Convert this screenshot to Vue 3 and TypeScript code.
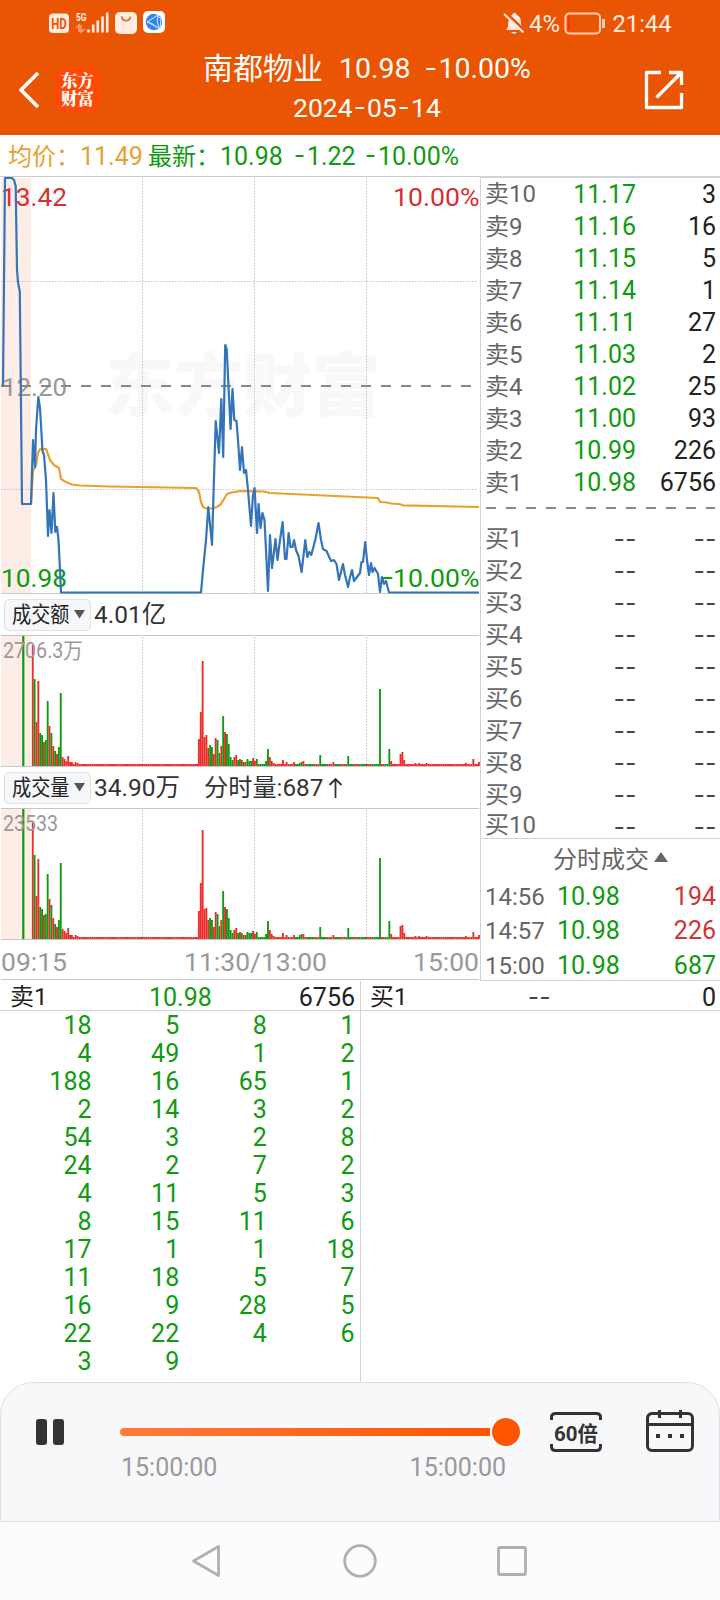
<script setup lang="ts">
type Level = { label: string; price: string; size: string }
type Bar = { x: number; h: number; fill: string }

const RED = '#ee2a2a'
const GREEN = '#109a10'

const asks: Level[] = [
  ['卖10', '11.17', '3'], ['卖9', '11.16', '16'], ['卖8', '11.15', '5'], ['卖7', '11.14', '1'],
  ['卖6', '11.11', '27'], ['卖5', '11.03', '2'], ['卖4', '11.02', '25'], ['卖3', '11.00', '93'],
  ['卖2', '10.99', '226'], ['卖1', '10.98', '6756'],
].map(([label, price, size]) => ({ label, price, size }))

const bids: string[] = Array.from({ length: 10 }, (_, i) => `买${i + 1}`)

const trades = [
  { time: '14:56', price: '10.98', size: '194', up: true },
  { time: '14:57', price: '10.98', size: '226', up: true },
  { time: '15:00', price: '10.98', size: '687', up: false },
]

const queue: (number | string)[][] = [
  [18, 5, 8, 1], [4, 49, 1, 2], [188, 16, 65, 1], [2, 14, 3, 2], [54, 3, 2, 8], [24, 2, 7, 2],
  [4, 11, 5, 3], [8, 15, 11, 6], [17, 1, 1, 18], [11, 18, 5, 7], [16, 9, 28, 5], [22, 22, 4, 6], [3, 9, '', ''],
]

const pricePoints =
  '3,386 5,178 12,178 14,180 15.7,186 17,270 18,282 19.8,292 20.8,386 22,504 31,504 33,440 35,467 36,430 38.3,397 40,408 41.3,430 42.5,451 44,455 46,480 48,536 49.5,510 51.5,533 53.5,493 55.3,532 57,527 58.5,540 60,570 61,592.5 201,592.5 203,570 206,540 208.3,507 212,545 215.7,421 219,453 221.3,399 223.2,457 225.2,345 226.7,349 230.6,429 232.5,389 234.3,420 236.5,421 238,440 240,470 242,447 244,473 246,470 248,490 251,526 253,495 254.6,488 257,533 258.6,504 260.5,528 262.5,513 264.5,520 266,550 268,591 270,535 272,568 275.5,539 277.5,560 280,540 282.6,522 285,559 286.5,559 288.6,533 290.5,547 292.5,547 294,540 296,550 298.5,556 301.6,572 305.3,540 307.3,557 309.3,552 311.3,555 315.5,539 318.5,523 321,540 323,549 326.5,551 331,561 334,560 336.5,564 339,580 343,564 345,575 348,587 350,577 352,570 354,581 357,577 360,573 361.5,562 363,562 365.2,542 367,560 369,575 371,563 372.5,572 374.5,568 378,574 380,592 382,577 384,584 386,581 389,592.5 479,592.5'

const averagePoints =
  '31,504 33,471 36,465 38,453 40,449 46,449 50,460 54,465 59,468 61,479 66,482 72,484.5 80,485.5 110,486.5 196,488 199,492 201,502 203,507 206,508.5 213,508.5 217,507 221,504 224,499 227,494 231,492.5 241,491 264,491.5 270,493 378,498 380,502 387,502.5 391,503.5 399,504 403,505.3 479,507'

/* minute index: [direction, turnover height, volume height] */
const peaks: Record<number, [string, number, number]> = {
  0: ['r', 121, 117], 1: ['g', 87, 84], 2: ['r', 44, 43], 3: ['r', 85, 80], 4: ['g', 33, 32], 5: ['g', 31, 30],
  6: ['r', 24, 24], 7: ['g', 26, 25], 8: ['g', 65, 65], 9: ['r', 40, 40], 10: ['g', 33, 34], 11: ['r', 20, 21],
  12: ['g', 15, 15], 13: ['r', 12, 12], 14: ['g', 19, 19], 15: ['g', 73, 76], 16: ['r', 9, 10], 17: ['r', 7, 8],
  18: ['r', 5, 6], 19: ['r', 10, 11], 20: ['r', 4, 4], 21: ['r', 4, 4], 23: ['r', 4, 4], 24: ['r', 3, 3],
  89: ['r', 27, 28], 90: ['r', 54, 56], 91: ['r', 105, 109], 92: ['r', 29, 30], 93: ['r', 31, 31], 94: ['r', 18, 19],
  95: ['g', 21, 21], 96: ['g', 19, 19], 97: ['r', 12, 12], 98: ['r', 28, 27], 99: ['g', 26, 25], 100: ['g', 13, 13],
  101: ['r', 20, 19], 102: ['g', 50, 48], 103: ['r', 34, 32], 104: ['g', 32, 30], 105: ['g', 22, 21], 106: ['g', 9, 9],
  107: ['g', 6, 6], 108: ['r', 9, 9], 109: ['r', 11, 11], 110: ['g', 6, 6], 111: ['g', 7, 7], 112: ['r', 6, 6],
  113: ['g', 4, 4], 114: ['r', 4, 4], 115: ['g', 7, 7], 116: ['g', 5, 6], 117: ['g', 5, 6], 118: ['r', 8, 8],
  119: ['r', 5, 5], 120: ['g', 7, 7], 125: ['g', 5, 5], 126: ['g', 17, 18], 127: ['r', 9, 9], 128: ['r', 5, 5],
  129: ['r', 3, 3], 134: ['r', 6, 6], 136: ['r', 4, 4], 140: ['r', 4, 4], 143: ['g', 3, 4], 144: ['g', 4, 5], 145: ['r', 5, 5],
  154: ['g', 11, 12], 161: ['r', 4, 4], 169: ['g', 10, 11], 186: ['g', 77, 81], 191: ['g', 17, 18], 192: ['r', 5, 5],
  197: ['r', 12, 13], 198: ['r', 14, 14], 199: ['r', 6, 6], 205: ['r', 3, 3], 207: ['r', 3, 3], 211: ['r', 3, 3],
  232: ['r', 3, 3], 236: ['r', 7, 7], 239: ['r', 4, 4],
}

function buildBars(kind: 1 | 2): Bar[] {
  return Array.from({ length: 240 }, (_, i) => {
    const peak = peaks[i]
    const quietGreen = (i > 120 && i < 126) || (i > 136 && i < 193 && i % 7 < 4)
    const green = peak ? peak[0] === 'g' : quietGreen
    return { x: 31.8 + i * 1.867, h: peak ? peak[kind] : 2, fill: green ? GREEN : RED }
  })
}

const panels = [
  { id: 'amount', title: '成交额', value: '4.01亿', extra: '', max: '2706.3万', maxWidth: 80, bars: buildBars(1) },
  { id: 'volume', title: '成交量', value: '34.90万', extra: '分时量:687', max: '23533', maxWidth: 55, bars: buildBars(2) },
]
const gridX = [142.5, 254.5, 366.5]
</script>

<template>
  <main class="screen">
    <header class="header">
      <svg class="status" width="720" height="46" viewBox="0 0 720 46">
        <rect x="49" y="13.500" width="20" height="19.500" rx="4" fill="#ffece2" />
        <text x="51.300" y="28.500" class="hd" textLength="15.500" lengthAdjust="spacingAndGlyphs">HD</text>
        <text x="76" y="21" class="net" textLength="10.500" lengthAdjust="spacingAndGlyphs">5G</text>
        <path d="M76 28l3-3v7M81 25v7l4-3" fill="none" stroke="#f5a77f" stroke-width="1.500" />
        <path d="M88.500 32.500v-3M93.200 32.500v-8M97.800 32.500v-12M102.500 32.500v-16M107.200 32.500v-20" stroke="#ffece2" stroke-width="2.600" />
        <rect x="115" y="12" width="22" height="22" rx="5" fill="#ffece2" />
        <path d="M121.500 16.500c1 5.500 8 5.500 9 0" fill="none" stroke="#e8703a" stroke-width="1.800" />
        <rect x="143" y="11" width="22" height="22" rx="5" fill="#fff" />
        <circle cx="154" cy="22" r="8.200" fill="#3285ef" />
        <path d="M147 22l11-7q-2 7 1 13zM147 22l5 1.500 5 4M156 14l5 5-1 9" fill="none" stroke="#d7e8ff" stroke-width="1" />
        <path d="M506 30c2.500-2 2-5 2.500-9 .7-4 2.500-5.500 4-6.300 0-2.200 4-2.200 4 0 3.500 1.500 4.500 4.500 4.500 8 0 3.500 1 5.300 2.500 7.300z" fill="#ffece2" />
        <path d="M511 32h6q-3 3.500-6 0z" fill="#ffece2" />
        <path d="M505.500 12l19 18.500" stroke="#ea5504" stroke-width="2.500" />
        <path d="M504 14l19.500 18.500" stroke="#ffece2" stroke-width="2" />
        <text x="529" y="32" class="clock" textLength="31" lengthAdjust="spacingAndGlyphs">4%</text>
        <rect x="565.500" y="13.500" width="34.500" height="20" rx="4" fill="none" stroke="#ffd0b6" stroke-width="2" />
        <path d="M569 17v13" stroke="#ff2f18" stroke-width="2" />
        <path d="M603.500 19v9" stroke="#ffd0b6" stroke-width="3" />
        <text x="612.500" y="32.300" class="clock" textLength="59" lengthAdjust="spacingAndGlyphs">21:44</text>
      </svg>
      <div class="bar">
        <svg class="back" width="22" height="40" viewBox="0 0 22 40"><path d="M20 3L3 20 20 37" fill="none" stroke="#fff" stroke-width="3.800" stroke-linejoin="round" /></svg>
        <div class="logo">东方财富</div>
        <div class="heading">
          <div class="name"><span>南都物业</span><span class="last">10.98</span><span class="chg"><i class="neg">-</i>10.00%</span></div>
          <div class="date">2024<i class="neg">-</i>05<i class="neg">-</i>14</div>
        </div>
        <svg class="share" width="40" height="40" viewBox="0 0 40 40" fill="none" stroke="#fff" stroke-width="3.300">
          <path d="M17 2.500H2.500v35h35V23M25 2.500h12.500V15M37 3L12.500 27.500" stroke-linejoin="round" />
        </svg>
      </div>
    </header>

    <section class="quote">
      <span class="avg-label">均价：</span><span class="avg">11.49</span>
      <span class="new-label">最新：</span><span class="new">10.98</span>
      <span class="diff"><i class="neg">-</i>1.22</span><span class="pct"><i class="neg">-</i>10.00%</span>
    </section>

    <section class="market">
      <div class="charts">
        <svg class="chart" width="480" height="418" viewBox="0 176 480 418">
          <rect x="1" y="178" width="30" height="415" fill="#fdede6" />
          <text x="105" y="411" class="watermark" textLength="276" lengthAdjust="spacingAndGlyphs">东方财富</text>
          <path d="M0 176.500H480M1 593.500H479" stroke="#cdcdd0" />
          <path v-for="x in gridX" :key="x" :d="`M${x} 178V593`" class="dots" />
          <path d="M1 281.500H477M1 489.500H477" class="dots" />
          <text x="2" y="396" class="axis gray" textLength="65" lengthAdjust="spacingAndGlyphs">12.20</text>
          <path d="M1 386H472" stroke="#888" stroke-width="2" stroke-dasharray="10 10" />
          <polyline :points="averagePoints" class="line average" />
          <text x="1" y="205.700" class="axis up" textLength="66" lengthAdjust="spacingAndGlyphs">13.42</text>
          <text x="393" y="205.700" class="axis up" textLength="86.500" lengthAdjust="spacingAndGlyphs">10.00%</text>
          <text x="1" y="587" class="axis down" textLength="66" lengthAdjust="spacingAndGlyphs">10.98</text>
          <text x="380" y="585.500" class="axis down" textLength="13" lengthAdjust="spacingAndGlyphs">-</text>
          <text x="393" y="587" class="axis down" textLength="86.500" lengthAdjust="spacingAndGlyphs">10.00%</text>
          <polyline :points="pricePoints" class="line price" />
        </svg>

        <template v-for="p in panels" :key="p.id">
          <div class="strip" :class="p.id">
            <div class="chip"><span class="chip-text">{{ p.title }}</span><svg width="11" height="9" viewBox="0 0 11 9"><path d="M0 0h11L5.500 8.500z" fill="#555" /></svg></div>
            <span class="total">{{ p.value }}</span>
            <span v-if="p.extra" class="extra">{{ p.extra }}<svg width="15" height="22" viewBox="0 0 15 22"><path d="M7.500 21V2M1.500 8l6-6 6 6" fill="none" stroke="#333" stroke-width="1.800" /></svg></span>
          </div>
          <svg class="chart" width="480" height="132" viewBox="0 0 480 132">
            <rect x="1" y="1" width="30" height="130" fill="#fdede6" />
            <path d="M1 .5H479M1 131.500H479" stroke="#c6c6c6" />
            <path v-for="x in gridX" :key="x" :d="`M${x} 2V131`" class="dots" />
            <rect x="22.200" y="1" width="2.200" height="130" :fill="GREEN" />
            <rect v-for="b in p.bars" :key="b.x" :x="b.x" :y="131 - b.h" width="1.867" :height="b.h" :fill="b.fill" />
            <text x="3" y="23" class="peak" :textLength="p.maxWidth" lengthAdjust="spacingAndGlyphs">{{ p.max }}</text>
          </svg>
        </template>
        <div class="times"><span>09:15</span><span>11:30/13:00</span><span>15:00</span></div>
      </div>

      <aside class="book">
        <div v-for="a in asks" :key="a.label" class="level">
          <span class="tag">{{ a.label }}</span><span class="px">{{ a.price }}</span><span class="qty">{{ a.size }}</span>
        </div>
        <svg class="split" width="239" height="24" viewBox="0 0 239 24"><path d="M5 10H234" stroke="#888" stroke-width="2" stroke-dasharray="10 10" /></svg>
        <div v-for="b in bids" :key="b" class="level bid">
          <span class="tag">{{ b }}</span><span class="none"><i>--</i></span><span class="none"><i>--</i></span>
        </div>
        <div class="tape">
          <div class="tape-title">分时成交<svg width="14" height="10" viewBox="0 0 14 10"><path d="M0 10h14L7 0z" fill="#666" /></svg></div>
          <div v-for="t in trades" :key="t.time" class="trade">
            <span class="tm">{{ t.time }}</span><span class="tp">{{ t.price }}</span><span class="ts" :class="{ rise: t.up }">{{ t.size }}</span>
          </div>
        </div>
      </aside>
    </section>

    <section class="queues">
      <div class="side sell">
        <div class="side-head"><span>卖1</span><span class="side-price">10.98</span><span class="side-qty">6756</span></div>
        <div v-for="(row, i) in queue" :key="i" class="lots"><span v-for="(n, j) in row" :key="j">{{ n }}</span></div>
      </div>
      <div class="side buy">
        <div class="side-head"><span>买1</span><span class="side-none"><i>--</i></span><span class="side-qty">0</span></div>
      </div>
    </section>

    <section class="player">
      <svg class="pause" width="28" height="26" viewBox="0 0 28 26" fill="#333"><rect width="11" height="26" rx="3" /><rect x="17" width="11" height="26" rx="3" /></svg>
      <div class="progress">
        <div class="rail"><div class="fill"></div><div class="knob"></div></div>
        <div class="stamps"><span>15:00:00</span><span>15:00:00</span></div>
      </div>
      <svg class="speed" width="52" height="40" viewBox="0 0 52 40">
        <path d="M1.500 8V5.500q0-4 4-4h41q4 0 4 4V8M1.500 32v2.500q0 4 4 4h41q4 0 4-4V32" fill="none" stroke="#333" stroke-width="3" />
        <text x="4" y="28.500" textLength="44" lengthAdjust="spacingAndGlyphs">60倍</text>
      </svg>
      <svg class="calendar" width="48" height="42" viewBox="0 0 48 42" fill="none" stroke="#333" stroke-width="3">
        <rect x="1.500" y="3.500" width="45" height="37" rx="4.500" />
        <path d="M2 14.500H46M13.500 0v8M34.500 0v8" />
        <path d="M10 26h4M22 26h4M34 26h4" stroke-width="4" />
      </svg>
    </section>

    <nav class="nav">
      <svg width="30" height="34" viewBox="0 0 30 34"><path d="M27.500 2.500v29L2.500 17z" /></svg>
      <svg width="34" height="34" viewBox="0 0 34 34"><circle cx="17" cy="17" r="15.300" /></svg>
      <svg width="30" height="30" viewBox="0 0 30 30"><rect x="1.500" y="1.500" width="27" height="27" rx="1.500" /></svg>
    </nav>
  </main>
</template>

<style>
body { margin: 0; background: #fff; }
</style>

<style scoped>
.screen { width: 720px; height: 1600px; overflow: hidden; display: flex; flex-direction: column; background: #fff; font-family: Roboto, "Noto Sans CJK SC", sans-serif; font-size: 25px; color: #222; }
.screen svg { display: block; flex: none; }
i { font-style: normal; }
span { white-space: nowrap; }
.neg { display: inline-block; transform: translateY(-1px) scaleX(1.3); margin: 0 4px 0 3px; }

.header { height: 135px; background: #ea5504; color: #fff; flex: none; }
.hd { font: 700 14px Roboto, sans-serif; fill: #ea5504; }
.net { font: 700 11px Roboto, sans-serif; fill: #ffece2; }
.clock { font: 24px Roboto, sans-serif; fill: #ffece2; }
.bar { display: flex; height: 89px; }
.back { margin: 24px 0 0 18px; }
.logo { width: 45px; height: 45px; box-sizing: border-box; padding: 4px 6px; margin: 21px 0 0 15px; border-radius: 11px; background: #ff4a05; font: 900 16.500px/18px "Noto Serif CJK SC", "Noto Sans CJK SC", sans-serif; }
.heading { width: 530px; margin-left: 3px; display: flex; flex-direction: column; }
.name { display: flex; height: 42px; line-height: 46px; font-size: 30px; margin-left: 100px; }
.last { font-size: 28.500px; margin-left: 16px; }
.chg { font-size: 28.500px; margin-left: 13px; }
.date { margin-left: 190px; font-size: 26.500px; line-height: 40px; }
.share { margin: 24px 0 0 11px; }

.quote { height: 41px; line-height: 44px; display: flex; flex: none; color: #109a10; }
.avg-label, .new-label { font-size: 24px; width: 72px; }
.avg-label, .avg { color: #e9a02f; }
.avg-label { margin-left: 8px; }
.avg { width: 68px; }
.new { width: 73px; }
.diff { width: 71px; }

.market { display: flex; height: 805px; flex: none; }
.charts { width: 480px; display: flex; flex-direction: column; border-right: 1px solid #d0d3d7; }
.watermark { font: 900 69px "Noto Sans CJK SC", sans-serif; fill: #f8f8f8; }
.dots { fill: none; stroke: #c4c4c4; stroke-dasharray: 1.500 1.500; }
.axis { font: 26.500px Roboto, sans-serif; }
.gray { fill: #999; }
.up { fill: #d62f2f; }
.down { fill: #109a10; }
.line { fill: none; stroke-width: 2.200; stroke-linejoin: round; }
.average { stroke: #e8a12d; }
.price { stroke: #3474b8; }
.peak { font: 22px Roboto, "Noto Sans CJK SC", sans-serif; fill: #999; }
.strip { height: 41px; display: flex; align-items: center; color: #333; }
.chip { box-sizing: border-box; width: 87px; height: 32px; margin-left: 4px; border: 1px solid #dfe1e5; border-radius: 5px; background: #f6f7fa; display: flex; align-items: center; color: #222; }
.chip-text { font-size: 22px; line-height: 30px; width: 57px; margin: 0 5px 0 7px; transform: scaleX(.87); transform-origin: left; }
.total { margin-left: 3px; font-size: 24.500px; line-height: 38px; }
.extra { margin-left: 24px; font-size: 24.200px; line-height: 38px; display: flex; align-items: center; gap: 5px; }
.times { height: 40px; box-sizing: border-box; border-bottom: 1px solid #c8c8c8; display: grid; grid-template-columns: 160px 189px 129px; color: #999; font-size: 26.500px; line-height: 43px; margin: 0 1px 0 1px; }
.times span:nth-child(2) { text-align: center; }
.times span:nth-child(3) { text-align: right; }

.book { width: 239px; box-sizing: border-box; border-top: 2px solid #d0d3d7; border-bottom: 1px solid #d0d3d7; display: flex; flex-direction: column; }
.level { height: 32px; line-height: 34px; display: grid; grid-template-columns: 71px 80px 80px; padding-left: 4px; flex: none; }
.level > :nth-child(n + 2) { text-align: right; }
.level:first-child .tag { line-height: 32px; }
.tag { color: #666; font-size: 24px; }
.px { color: #109a10; }
.bid { line-height: 35px; }
.bid:nth-child(21) .tag { line-height: 31px; }
.none i, .side-none i { display: inline-block; letter-spacing: 2px; margin-right: -2px; transform: scaleX(1.3); transform-origin: right; color: #444; }
.tape { border-top: 1px solid #d0d3d7; margin-top: -4px; flex: 1; }
.tape-title { height: 39px; padding-left: 72px; display: flex; align-items: center; gap: 5px; color: #666; font-size: 24px; line-height: 40px; padding-top: 2px; box-sizing: border-box; }
.tape-title svg { margin-bottom: 5px; }
.trade { height: 34.400px; line-height: 38px; display: grid; grid-template-columns: 71px 85px 75px; padding-left: 4px; }
.tm { color: #666; font-size: 24px; }
.tp, .ts { color: #109a10; }
.tp { margin-left: 1px; }
.ts { text-align: right; }
.ts.rise { color: #d03434; }

.queues { display: flex; height: 401px; flex: none; }
.side { box-sizing: border-box; }
.side.sell { border-right: 1px solid #d0d3d7; width: 361px; }
.side.buy { width: 359px; }
.side-head { height: 30px; box-sizing: border-box; border-bottom: 1px solid #d0d3d7; display: grid; grid-template-columns: 139px 1fr auto; padding: 0 5px 0 10px; line-height: 33px; }
.side-head > :first-child { font-size: 24px; }
.buy .side-head { padding: 0 4px 0 9px; grid-template-columns: 159px 1fr auto; }
.side-none i { transform-origin: left; }
.side-price { color: #109a10; }
.lots { display: grid; grid-template-columns: 91.500px repeat(3, 87.700px); height: 28px; line-height: 30px; color: #109a10; text-align: right; }

.player { box-sizing: border-box; height: 140px; border: 1px solid #dedfe2; border-radius: 33px 33px 0 0; background: #f8f8fb; display: flex; flex: none; }
.pause { margin: 36px 0 0 35px; }
.progress { width: 400px; margin-left: 56px; }
.rail { height: 28px; margin-top: 35px; display: flex; align-items: center; }
.fill { width: 370px; height: 8px; border-radius: 4px 0 0 4px; background: linear-gradient(90deg, #ff7b3c, #f50); }
.knob { width: 28px; height: 28px; border-radius: 50%; background: #f50; margin-left: 2px; box-shadow: 0 0 0 2px #fff; }
.stamps { display: flex; justify-content: space-between; width: 386px; padding-left: 1px; box-sizing: border-box; margin-top: 6px; line-height: 31px; color: #999; }
.speed { margin: 29px 0 0 30px; }
.speed text { font: 700 21px Roboto, "Noto Sans CJK SC", sans-serif; fill: #333; }
.calendar { margin: 27px 0 0 44px; }

.nav { height: 78px; background: #fcfcfc; display: flex; align-items: center; flex: none; }
.nav svg { fill: none; stroke: #b0b0b0; stroke-width: 2.800; stroke-linejoin: round; }
.nav svg:nth-child(1) { margin-left: 191px; }
.nav svg:nth-child(2) { margin-left: 122px; }
.nav svg:nth-child(3) { margin-left: 120px; }
</style>
